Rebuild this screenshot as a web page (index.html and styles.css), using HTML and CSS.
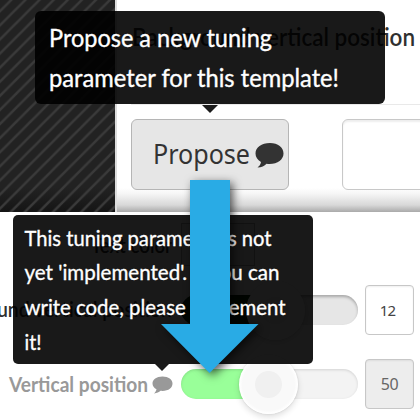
FILE: index.html
```
<!DOCTYPE html>
<html lang="en">
<head>
<meta charset="utf-8">
<title>Tuning parameters</title>
<link rel="stylesheet" href="styles.css">
</head>
<body>
<main class="stage">
  <section class="top">
    <div class="stripes">
      <svg width="115" height="212"><defs><pattern id="stripe" width="14.1" height="14.1" patternUnits="userSpaceOnUse"><path d="M-14.1 25.300L28.200 -17M-14.1 39.400L28.200 -2.900M-14.1 11.200L28.200 -31.1" stroke="#3a3a3a" stroke-width="2.4"/></pattern></defs><rect width="115" height="212" fill="url(#stripe)"/></svg>
    </div>
    <div class="panel">
      <div class="heading"><svg width="290" height="40"><text x="1" y="25" textLength="283" lengthAdjust="spacingAndGlyphs">Background vertical position</text></svg></div>
      <div class="controls">
        <div class="propose"><svg width="156" height="68"><text x="21" y="43.500" textLength="97" lengthAdjust="spacingAndGlyphs">Propose</text><path d="M138 23C129.500 23 123.500 27.500 123.500 33.500C123.500 37 125.500 40 129 42C128.500 44.500 127.500 46 125.500 47.500C129.500 47.500 132.500 46 134.500 43.800C144.500 45 151.500 40 151.500 33.500C151.500 27.500 146 23 138 23Z"/></svg></div>
        <div class="field"></div>
      </div>
    </div>
  </section>
  <section class="bottom">
    <div class="row first"><span class="label"><svg width="173" height="34"><text x="91" y="25" textLength="81" lengthAdjust="spacingAndGlyphs">Text color</text></svg></span><span class="select"></span></div>
    <div class="row second"><span class="label"><svg width="173" height="34"><text x="-73" y="24" textLength="245" lengthAdjust="spacingAndGlyphs">Background vertical position</text></svg></span><span class="slider active"><i class="knob"></i></span><span class="value">12</span></div>
    <div class="row third"><span class="label"><svg width="173" height="34"><text x="9" y="24.500" textLength="139" lengthAdjust="spacingAndGlyphs">Vertical position</text><path d="M162.500 9.500C156.500 9.500 152.500 12.500 152.500 16.500C152.500 19 154 21 156.500 22.300C156 24 155.500 25 154 26.500C157 26.300 159 25 160.500 23.800C168 24.500 172.500 21 172.500 16.500C172.500 12.500 168.500 9.500 162.500 9.500Z"/></svg></span><span class="slider"><i class="knob"></i></span><span class="value disabled">50</span></div>
  </section>
  <div class="tip tip-large"><svg width="350" height="93"><text x="14" y="36" textLength="223" lengthAdjust="spacingAndGlyphs">Propose a new tuning</text><text x="14" y="76" textLength="290" lengthAdjust="spacingAndGlyphs">parameter for this template!</text></svg></div>
  <div class="tip tip-small"><svg width="300" height="149"><text x="11.500" y="30.500" textLength="247" lengthAdjust="spacingAndGlyphs">This tuning parameter is not</text><text x="11.500" y="65" textLength="255" lengthAdjust="spacingAndGlyphs">yet 'implemented'. If you can</text><text x="11.500" y="100" textLength="261" lengthAdjust="spacingAndGlyphs">write code, please implement</text><text x="11.500" y="135" textLength="17" lengthAdjust="spacingAndGlyphs">it!</text></svg></div>
  <svg class="arrow" width="420" height="420"><path d="M190 180H230V324H258.500L209.500 373L161 324H190Z"/></svg>
</main>
</body>
</html>
```
FILE: styles.css
```
* { box-sizing: border-box; }
body { margin: 0; background: #fff; font-family: Lato, "Open Sans", sans-serif; }
svg { display: block; }
.stage { position: relative; width: 420px; height: 420px; overflow: hidden; }
.top { display: flex; height: 212px; overflow: hidden; }
.stripes { width: 115px; flex: none; background: linear-gradient(#222 188px, #151515); }
.panel { width: 305px; flex: none; border-left: 2px solid #ddd; padding-left: 14px; background: linear-gradient(#fff 188px, #f5f5f5 194px, #d8d8d8 205px, #aaa 212px); }
.heading { height: 105px; padding-top: 21px; border-bottom: 1px solid #e9e9e9; overflow: hidden; }
.heading text { font-size: 25px; font-weight: 600; fill: #303030; }
.controls { display: flex; gap: 53px; padding-top: 14px; }
.propose { width: 158px; height: 71px; flex: none; border: 1px solid #b5b5b5; border-radius: 6px; background: #e6e6e6; }
.propose text { font: 28px "Noto Sans", sans-serif; fill: #333; }
.propose path { fill: #333; }
.field { width: 90px; height: 71px; flex: none; border: 1px solid #c8c8c8; border-radius: 6px; background: #fff; box-shadow: inset 0 2px 2px #eee; }
.bottom { height: 208px; background: #fff; }
.row { display: flex; align-items: center; }
.label { width: 181px; flex: none; }
.label text { font-size: 21px; font-weight: 600; fill: #303030; }
.first { padding-top: 11px; height: 54px; }
.select { width: 74px; height: 43px; border: 1px solid #aaa; background: #eee; }
.second { height: 87px; }
.third { height: 61px; }
.third text { font-weight: 700; fill: #999; }
.third path { fill: #999; }
.slider { position: relative; width: 177px; height: 30px; flex: none; border-radius: 15px; background: linear-gradient(90deg, #9f9 88px, #f3f3f3 88px); box-shadow: inset 0 1px 3px #0002; }
.active { background: linear-gradient(90deg, #030 92px, #e6e6e6 92px); box-shadow: inset 0 2px 3px #0004; }
.knob { position: absolute; left: 58px; top: -14px; width: 59px; height: 59px; border-radius: 50%; background: radial-gradient(circle, #f0f0f0 13px, #f9f9f9 14px 26px, #fff 29px); box-shadow: 0 3px 6px #0002, 0 0 2px #0002; }
.active .knob { left: 65px; top: -14px; }
.value { width: 49px; height: 50px; flex: none; margin-left: 7px; border: 1px solid #c7c7c7; border-radius: 4px; color: #444; background: #fff; font: 15px/49px "Noto Sans", sans-serif; text-align: center; padding-right: 4px; letter-spacing: -0.8px; box-shadow: inset 0 1px 2px #0001; }
.disabled { background: #ededed; padding-right: 0; font-size: 16px; letter-spacing: -0.5px; color: #666; }
.tip { position: absolute; background: rgba(0, 0, 0, .9); border-radius: 6px; }
.tip::after { content: ""; position: absolute; top: 100%; border: 8px solid transparent; border-top-color: #1a1a1a; border-bottom: 0; }
.tip text { fill: #fff; stroke: #fff; stroke-width: .35px; }
.tip-large { left: 35px; top: 11px; width: 350px; height: 93px; }
.tip-large::after { left: 167px; margin-top: 1px; }
.tip-large text { font-size: 25px; }
.tip-small { left: 13px; top: 215px; width: 300px; height: 149px; border-radius: 5px; }
.tip-small::after { left: 142px; border-width: 7px 7px 0; }
.tip-small text { font-size: 22px; }
.arrow { position: absolute; left: 0; top: 0; filter: drop-shadow(3px 3px 5px rgba(0, 0, 0, .65)); }
.arrow path { fill: #29abe5; }
```
